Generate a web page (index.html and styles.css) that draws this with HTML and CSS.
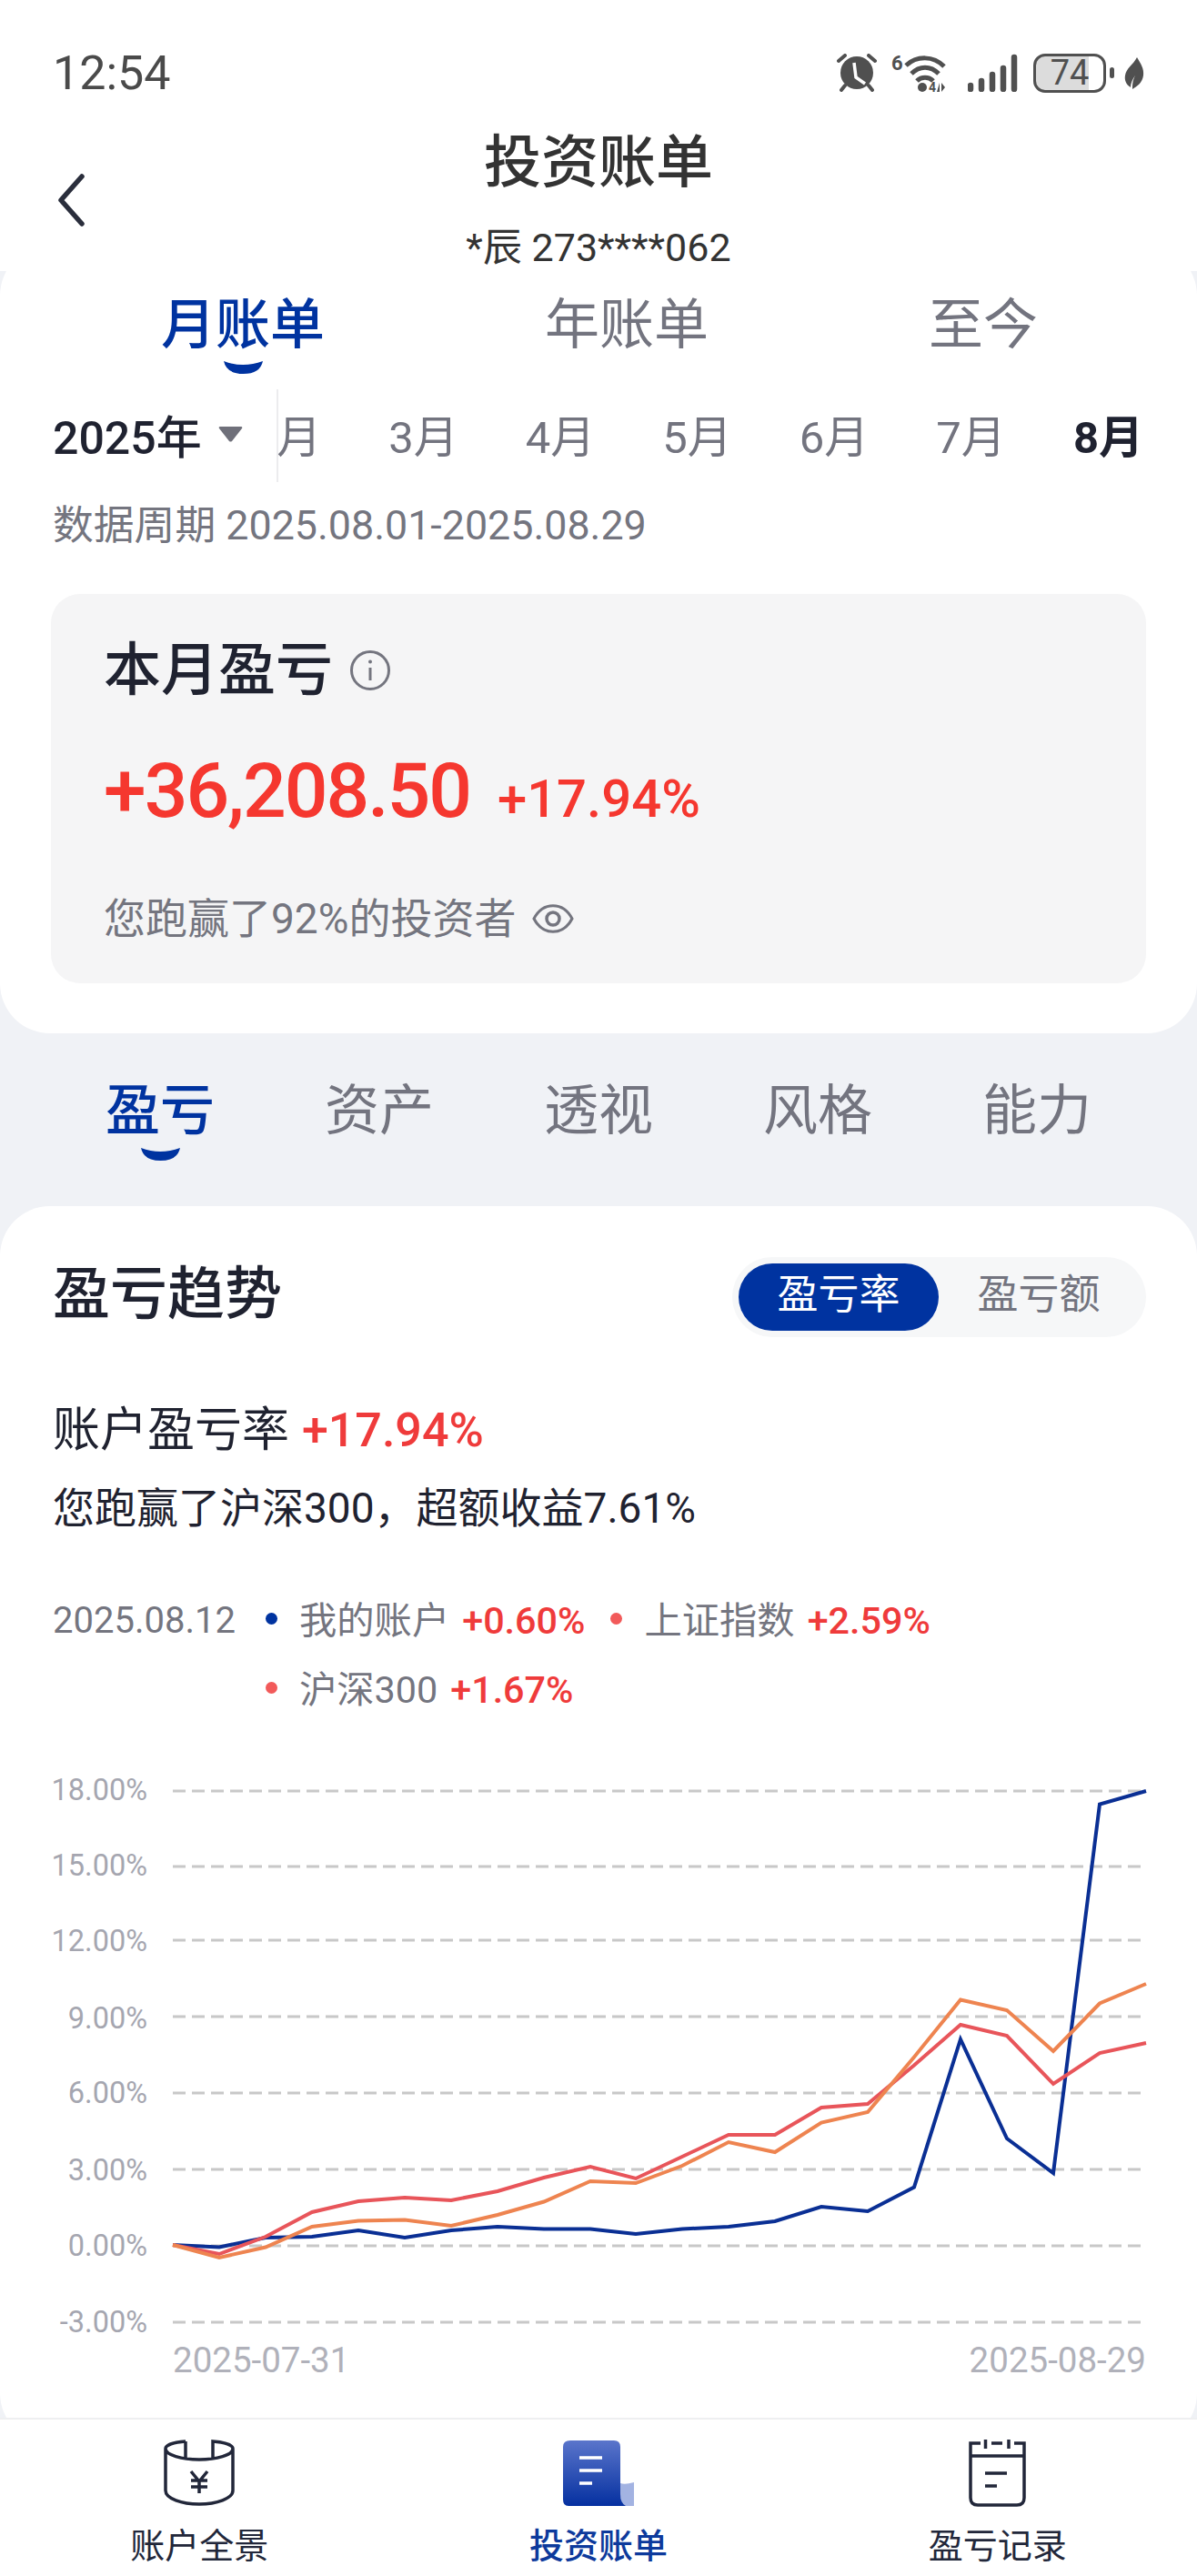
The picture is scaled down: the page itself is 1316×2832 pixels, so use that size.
FILE: index.html
```html
<!DOCTYPE html>
<html lang="zh-CN">
<head>
	<meta charset="UTF-8">
	<meta name="viewport" content="width=device-width, initial-scale=1">
	<title>投资账单</title>
	<link rel="stylesheet" href="styles.css">
</head>
<body>

<header class="top">
	<div class="status">
		<span class="time">12:54</span>
		<div class="status-icons">
			<svg class="ic-alarm" width="44" height="42" viewBox="0 0 44 42">
				<circle cx="22" cy="21" r="18" fill="#505050"/>
				<path d="M2 8 9 2M42 8 35 2M9 35 5 40M35 35 39 40" stroke="#505050" stroke-width="4" stroke-linecap="round" fill="none"/>
				<path d="M19 10 21 26 31 33" stroke="#fff" stroke-width="3.5" fill="none"/>
			</svg>
			<div class="wifi">
				<svg width="62" height="44" viewBox="0 0 62 44">
					<text class="wifi-g" x="0" y="19">6</text>
					<path d="M16 14C28 3 46 3 58 15M22 23C31 14 43 14 52 23M28 31C33 26 41 26 46 31" stroke="#505050" stroke-width="5" fill="none"/>
					<circle cx="34" cy="38" r="5" fill="#505050"/>
					<text class="wifi-4" x="41" y="43">4</text>
					<path d="M53 33V43H50ZM55 43V33L59 38Z" fill="#505050"/>
				</svg>
			</div>
			<svg class="ic-signal" width="56" height="42" viewBox="0 0 56 42">
				<path d="M3 35V39M15 30V39M27 23V39M39 16V39M51 4V39" stroke="#505050" stroke-width="6.5" stroke-linecap="round"/>
			</svg>
			<div class="battery">
				<span class="batt-box">74</span>
				<span class="batt-nub"></span>
			</div>
			<svg class="ic-leaf" width="22" height="35" viewBox="0 0 22 35">
				<path d="M14 0C18 7 22 12 21 20 20 28 14 32 9 35 9 30 9 26 12 20 9 24 7 29 7 33 2 30 0 25 1 20 2 12 10 8 14 0Z" fill="#505050"/>
			</svg>
		</div>
	</div>
	<div class="titlebar">
		<svg class="back" width="32" height="58" viewBox="0 0 32 58">
			<path d="M28 3 5 29 28 55" stroke="#2a2e3c" stroke-width="5.5" stroke-linecap="round" stroke-linejoin="round" fill="none"/>
		</svg>
		<div class="titles">
			<h1>投资账单</h1>
			<p>*辰 273****062</p>
		</div>
	</div>
</header>

<section class="bill">
	<div class="period-tabs">
		<div class="ptab on">月账单
			<svg class="smile" width="43" height="14" viewBox="0 0 43 14"><path d="M0 0Q21 8 43 0 40 14 21.500 14 3 14 0 0Z"/></svg>
		</div>
		<div class="ptab">年账单</div>
		<div class="ptab">至今</div>
	</div>

	<div class="months-row">
		<div class="year">2025年
			<svg width="27" height="18" viewBox="0 0 27 18"><path d="M2 1H25Q27 1 26 3L15 17Q13.500 18 12 17L1 3Q0 1 2 1Z" fill="#6f707a"/></svg>
		</div>
		<div class="months">
			<span>2月</span>
			<span>3月</span>
			<span>4月</span>
			<span>5月</span>
			<span>6月</span>
			<span>7月</span>
			<span class="cur">8月</span>
		</div>
	</div>

	<div class="data-period">数据周期 2025.08.01-2025.08.29</div>

	<div class="pnl-card">
		<div class="pnl-head">本月盈亏
			<svg width="46" height="46" viewBox="0 0 46 46">
				<circle cx="23" cy="23" r="20.500" stroke="#74757f" stroke-width="3" fill="none"/>
				<path d="M23 20V34" stroke="#74757f" stroke-width="3"/>
				<circle cx="23" cy="13.500" r="2" fill="#74757f"/>
			</svg>
		</div>
		<div class="pnl-nums">
			<span class="amount">+36,208.50</span>
			<span class="pct">+17.94%</span>
		</div>
		<div class="pnl-note">您跑赢了92%的投资者
			<svg width="46" height="36" viewBox="0 0 46 36">
				<path d="M2 18C12 -1 34 -1 44 18 34 37 12 37 2 18Z" stroke="#74757f" stroke-width="3" fill="none"/>
				<circle cx="23" cy="18" r="7" stroke="#74757f" stroke-width="3.500" fill="none"/>
			</svg>
		</div>
	</div>
</section>

<nav class="sub-tabs">
	<div class="stab on">盈亏
		<svg class="smile" width="43" height="14" viewBox="0 0 43 14"><path d="M0 0Q21 8 43 0 40 14 21.500 14 3 14 0 0Z"/></svg>
	</div>
	<div class="stab">资产</div>
	<div class="stab">透视</div>
	<div class="stab">风格</div>
	<div class="stab">能力</div>
</nav>

<section class="trend">
	<div class="trend-head">
		<h2>盈亏趋势</h2>
		<div class="toggle">
			<span class="tg on">盈亏率</span>
			<span class="tg">盈亏额</span>
		</div>
	</div>

	<div class="rate-line">账户盈亏率 <span class="up">+17.94%</span></div>
	<div class="beat-line">您跑赢了沪深300，超额收益7.61%</div>

	<div class="legend">
		<div class="legend-date">2025.08.12</div>
		<div class="legend-items">
			<div class="li"><i class="dot blue"></i>我的账户 <span class="up">+0.60%</span></div>
			<div class="li"><i class="dot red"></i>上证指数 <span class="up">+2.59%</span></div>
			<div class="li"><i class="dot red"></i>沪深300 <span class="up">+1.67%</span></div>
		</div>
	</div>

	<svg class="chart" width="1316" height="670" viewBox="0 1950 1316 670">
		<g class="grid">
			<line x1="190" x2="1254" y1="1969" y2="1969"/>
			<line x1="190" x2="1254" y1="2052" y2="2052"/>
			<line x1="190" x2="1254" y1="2133" y2="2133"/>
			<line x1="190" x2="1254" y1="2217" y2="2217"/>
			<line x1="190" x2="1254" y1="2301" y2="2301"/>
			<line x1="190" x2="1254" y1="2385" y2="2385"/>
			<line x1="190" x2="1254" y1="2469" y2="2469"/>
			<line x1="190" x2="1254" y1="2553" y2="2553"/>
		</g>
		<g class="ylabels">
			<text x="162" y="1979">18.00%</text>
			<text x="162" y="2062">15.00%</text>
			<text x="162" y="2145">12.00%</text>
			<text x="162" y="2230">9.00%</text>
			<text x="162" y="2312">6.00%</text>
			<text x="162" y="2397">3.00%</text>
			<text x="162" y="2480">0.00%</text>
			<text x="162" y="2564">-3.00%</text>
		</g>
		<polyline class="ln-blue" points="190,2468 241,2470.500 292,2460 343,2459 394,2452 445,2460 496,2452 547,2448 598,2450.500 649,2450.500 699,2456 750,2450.500 801,2448 852,2442 903,2426 954,2431 1005,2404.500 1056,2242 1107,2351 1158,2389 1209,1983.500 1260,1969"/>
		<polyline class="ln-red" points="190,2468 241,2478 292,2459 343,2432 394,2420 445,2416 496,2419 547,2409 598,2394 649,2382 699,2395 750,2371 801,2347 852,2347 903,2317 954,2313 1005,2270.500 1056,2226 1107,2238 1158,2291 1209,2257 1260,2246"/>
		<polyline class="ln-orange" points="190,2468 241,2482 292,2470.500 343,2448 394,2441.500 445,2440.500 496,2447 547,2435 598,2420.500 649,2398 699,2400 750,2381 801,2355 852,2366 903,2333.500 954,2322 1005,2261.500 1056,2198.500 1107,2210 1158,2255 1209,2202.500 1260,2181"/>
		<text class="xlabel" x="190" y="2608">2025-07-31</text>
		<text class="xlabel" x="1260" y="2608" text-anchor="end">2025-08-29</text>
	</svg>
</section>

<footer class="tabbar">
	<div class="tb">
		<svg width="78" height="74" viewBox="0 0 78 74" fill="none" stroke="#22273a" stroke-width="3.500">
			<path d="M24 2C11 3 2 6 2 10 2 17 20 22 39 22 58 22 76 17 76 10 76 6 67 3 54 2V20M24 2V20M2 10V56C2 65 20 71 39 71 58 71 76 65 76 56V10"/>
			<path d="M30 35 39 46 48 35M30 45H48M30 52H48M39 46V59"/>
		</svg>
		<span>账户全景</span>
	</div>
	<div class="tb on">
		<svg width="78" height="74" viewBox="0 0 78 74">
			<defs>
				<linearGradient id="billGrad" x1="0" y1="0" x2="0" y2="1">
					<stop offset="0" stop-color="#5a75cb"/>
					<stop offset="1" stop-color="#0530a0"/>
				</linearGradient>
			</defs>
			<path d="M63 48Q68 50 78 47V73H68Q63 70 63 62Z" fill="#a3b3e2"/>
			<path d="M8 1H56Q63 1 63 8V60Q63 70 69 73H6Q0 73 0 66V8Q0 1 8 1Z" fill="url(#billGrad)"/>
			<path d="M18 20H43M18 34H43M18 48H32" stroke="#fff" stroke-width="3.500"/>
		</svg>
		<span>投资账单</span>
	</div>
	<div class="tb">
		<svg width="64" height="74" viewBox="0 0 64 74" fill="none" stroke="#22273a" stroke-width="3.500">
			<path d="M13 4H2V64Q2 72 10 72H53Q61 72 61 64V4H50M25 4H37M18.500 0V10M44 0V10M2 18H61M18 37H42M18 51H31"/>
		</svg>
		<span>盈亏记录</span>
	</div>
</footer>

</body>
</html>
```
FILE: styles.css
```css
html, body {
	margin: 0;
	height: 2832px;
	overflow: hidden;
}

body {
	width: 1316px;
	display: flex;
	flex-direction: column;
	background-color: #f0f2f6;
	color: #1f2230;
	font-family: Roboto, "Noto Sans CJK SC", sans-serif;
}

h1, h2, p {
	margin: 0;
	font-weight: 500;
}

/* 顶部 */
.top {
	position: relative;
	z-index: 1;
	height: 298px;
	padding-top: 40px;
	box-sizing: border-box;
	background-color: #fff;
}

.status {
	height: 80px;
	display: flex;
	align-items: center;
	justify-content: space-between;
	padding: 0 58px;
}

.time {
	font-size: 52px;
	color: #4a4a4a;
}

.status-icons {
	display: flex;
	align-items: center;
	gap: 16px;
}

.ic-signal {
	margin-left: 6px;
}

.ic-leaf {
	margin-left: -5px;
}

.wifi {
	height: 44px;
}

.wifi-g {
	font-size: 22px;
	font-weight: 700;
	fill: #505050;
}

.wifi-4 {
	font-size: 14px;
	font-weight: 700;
	fill: #505050;
}

.battery {
	display: flex;
	align-items: center;
	gap: 4px;
}

.batt-box {
	width: 80px;
	height: 43px;
	box-sizing: border-box;
	border: 3px solid #505050;
	border-radius: 13px;
	background: linear-gradient(90deg, #dcdcdc 78%, #fff 78%);
	color: #505050;
	font-size: 38px;
	line-height: 37px;
	text-align: center;
}

.batt-nub {
	width: 5px;
	height: 12px;
	border-radius: 3px;
	background-color: #505050;
}

.titlebar {
	display: grid;
	grid-template-columns: 120px 1fr 120px;
	align-items: center;
	margin-top: 22px;
}

.back {
	margin-left: 62px;
}

.titles {
	text-align: center;
	color: #333;
}

.titles h1 {
	font-size: 63px;
	line-height: 70px;
	padding-top: 2px;
}

.titles p {
	margin-top: 33px;
	font-size: 43px;
	line-height: 50px;
	font-weight: 400;
}

/* 账单卡片 */
.bill {
	margin-top: -28px;
	height: 866px;
	padding-top: 53px;
	box-sizing: border-box;
	background-color: #fff;
	border-radius: 55px;
}

.period-tabs {
	display: flex;
	align-items: flex-start;
	gap: 242px;
	padding-left: 177px;
}

.ptab {
	font-size: 60px;
	line-height: 70px;
	color: #73747f;
}

.ptab.on, .stab.on {
	color: #0033a0;
	font-weight: 500;
}

.smile {
	display: block;
	margin: 4px auto 0;
	fill: #0033a0;
}

.ptab:not(.on) {
	height: 88px;
}

.months-row {
	display: flex;
	height: 102px;
	margin-top: 17px;
}

.year {
	width: 306px;
	padding: 0 0 4px 58px;
	flex: none;
	display: flex;
	align-items: center;
	gap: 18px;
	font-size: 50px;
	font-weight: 500;
	border-right: 2px solid #ececee;
	box-sizing: border-box;
}

.months {
	flex: 1;
	display: flex;
	justify-content: flex-end;
	align-items: center;
	gap: 74px;
	padding: 0 59px 6px 0;
	overflow: hidden;
	font-size: 49px;
	color: #73747f;
}

.months span {
	flex: none;
}

.months .cur {
	color: #1f2230;
	font-weight: 700;
}

.data-period {
	margin: 18px 0 0 58px;
	font-size: 44.800px;
	line-height: 60px;
	color: #74757f;
}

.pnl-card {
	margin: 45px 56px 0;
	height: 428px;
	padding: 49px 0 0 58px;
	box-sizing: border-box;
	background-color: #f5f5f6;
	border-radius: 32px;
}

.pnl-head {
	display: flex;
	align-items: center;
	gap: 18px;
	font-size: 63px;
	line-height: 70px;
	font-weight: 500;
}

.pnl-nums {
	display: flex;
	align-items: baseline;
	gap: 30px;
	margin-top: 53px;
	color: #f5372f;
	line-height: 90px;
}

.amount {
	font-size: 84px;
	font-weight: 500;
	letter-spacing: -2px;
}

.pct {
	font-size: 58px;
	font-weight: 500;
}

.pnl-note {
	display: flex;
	align-items: center;
	gap: 18px;
	margin-top: 57px;
	font-size: 46px;
	line-height: 60px;
	color: #74757f;
}

/* 子标签 */
.sub-tabs {
	display: flex;
	align-items: flex-start;
	gap: 121px;
	padding: 51px 0 0 116px;
	height: 190px;
	box-sizing: border-box;
}

.stab {
	font-size: 60px;
	line-height: 70px;
	color: #73747f;
}

.stab .smile {
	margin-top: 5px;
}

/* 盈亏趋势 */
.trend {
	height: 1360px;
	flex: none;
	padding-top: 56px;
	box-sizing: border-box;
	background-color: #fff;
	border-radius: 55px;
}

.trend-head {
	display: flex;
	align-items: center;
	justify-content: space-between;
	padding: 0 56px 0 58px;
}

.trend-head h2 {
	font-size: 63px;
	line-height: 70px;
	padding-bottom: 6px;
}

.toggle {
	display: flex;
	align-items: center;
	width: 455px;
	height: 88px;
	padding: 7px;
	box-sizing: border-box;
	background-color: #f6f7f8;
	border-radius: 44px;
}

.tg {
	width: 220px;
	height: 74px;
	line-height: 69px;
	text-align: center;
	font-size: 45px;
	color: #73747f;
}

.tg.on {
	background-color: #0033a0;
	color: #fff;
	border-radius: 37px;
}

.up {
	color: #ef3b3b;
	font-weight: 500;
}

.rate-line {
	margin: 73px 0 0 58px;
	font-size: 52px;
	line-height: 60px;
	word-spacing: 1px;
}

.beat-line {
	margin: 25px 0 0 58px;
	font-size: 46px;
	line-height: 60px;
}

.legend {
	display: flex;
	margin: 56px 0 0 58px;
	font-size: 41.300px;
	line-height: 76px;
	color: #74757f;
}

.legend-date {
	width: 234px;
	flex: none;
	font-size: 40px;
}

.legend-items {
	display: flex;
	flex-wrap: wrap;
	column-gap: 28px;
	width: 760px;
}

.li {
	display: flex;
	align-items: center;
	gap: 14px;
}

.dot {
	width: 13px;
	height: 13px;
	margin-right: 10px;
	margin-bottom: 5px;
	border-radius: 50%;
}

.dot.blue {
	background-color: #0033a0;
}

.dot.red {
	background-color: #f25a5a;
}

.chart {
	display: block;
	margin-top: 54px;
}

.grid line {
	stroke: #c8c8c8;
	stroke-width: 3;
	stroke-dasharray: 14 7;
}

.ylabels text {
	font-size: 32.500px;
	fill: #a5a6b0;
	text-anchor: end;
}

.xlabel {
	font-size: 38.500px;
	fill: #b0b1ba;
}

polyline {
	fill: none;
	stroke-width: 4;
}

.ln-blue {
	stroke: #0a2f94;
}

.ln-red {
	stroke: #e8555a;
}

.ln-orange {
	stroke: #ee8450;
}

/* 底部导航 */
.tabbar {
	position: relative;
	z-index: 1;
	flex: 1;
	display: grid;
	grid-template-columns: repeat(3, 1fr);
	margin-top: -28px;
	padding-top: 22px;
	box-sizing: border-box;
	background-color: #fff;
	border-top: 2px solid #eeeff1;
}

.tb {
	display: flex;
	flex-direction: column;
	align-items: center;
	font-size: 38px;
	line-height: 50px;
	color: #22273a;
}

.tb span {
	margin-top: 18px;
}

.tb.on {
	color: #0d3a9c;
	font-weight: 500;
}
```
